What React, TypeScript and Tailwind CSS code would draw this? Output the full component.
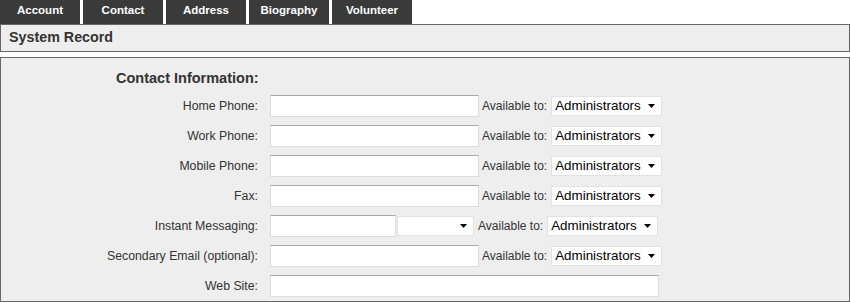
import React from "react";

const tabs = ["Account", "Contact", "Address", "Biography", "Volunteer"];

function FakeSelect({ width, text }: { width: string; text?: string }) {
  return (
    <div
      className={`${width} h-[20px] bg-white border border-[#e2e2e2] flex items-center pl-[3px] pr-[3px] justify-between`}
    >
      <span className="text-[13.4px] text-black leading-none">{text ?? ""}</span>
      <svg width="7" height="4" viewBox="0 0 7 4" className="mr-[3px]">
        <path d="M0 0 H7 L3.5 4 Z" fill="#000" />
      </svg>
    </div>
  );
}

function TextInput({ width }: { width: string }) {
  return (
    <input
      type="text"
      className={`${width} h-[22px] bg-white border border-[#dcdcdc] border-t-[#a9a9a9] outline-none`}
    />
  );
}

function Row({ label, children }: { label: string; children: React.ReactNode }) {
  return (
    <div className="h-[30px] flex items-center">
      <div className="w-[257px] text-right text-[12.3px] text-[#333]">{label}</div>
      <div className="ml-[12px] flex items-center">{children}</div>
    </div>
  );
}

function Avail({ ml = "ml-[3px]" }: { ml?: string }) {
  return <span className={`${ml} mr-[4px] text-[12px] text-[#333]`}>Available to:</span>;
}

export default function App() {
  return (
    <div
      className="w-[850px] h-[303px] bg-white"
      style={{ fontFamily: '"Liberation Sans", Arial, sans-serif' }}
    >
      <div className="flex gap-[3px] h-[24px]">
        {tabs.map((t) => (
          <div
            key={t}
            className="w-[80px] h-[24px] bg-[#3a3a3a] text-white font-bold text-[11.5px] flex items-center justify-center pb-[2px]"
          >
            {t}
          </div>
        ))}
      </div>
      <div className="h-[28px] border border-[#666] bg-[#eeeeee] flex items-center pl-[8px]">
        <span className="font-bold text-[14.3px] text-[#333]">System Record</span>
      </div>
      <div className="mt-[5px] h-[245px] border border-[#666] bg-[#eeeeee] pt-[10px]">
        <div className="h-[20px] leading-[20px] pl-[115px] font-bold text-[14.5px] text-[#333]">
          Contact Information:
        </div>
        <div className="mt-[3px]">
          {["Home Phone:", "Work Phone:", "Mobile Phone:", "Fax:"].map((l) => (
            <Row key={l} label={l}>
              <TextInput width="w-[209px]" />
              <Avail />
              <FakeSelect width="w-[111px]" text="Administrators" />
            </Row>
          ))}
          <Row label="Instant Messaging:">
            <TextInput width="w-[126px]" />
            <div className="ml-[1px]">
              <FakeSelect width="w-[77px]" />
            </div>
            <Avail ml="ml-[4px]" />
            <FakeSelect width="w-[111px]" text="Administrators" />
          </Row>
          <Row label="Secondary Email (optional):">
            <TextInput width="w-[209px]" />
            <Avail />
            <FakeSelect width="w-[111px]" text="Administrators" />
          </Row>
          <Row label="Web Site:">
            <TextInput width="w-[389px]" />
          </Row>
        </div>
      </div>
    </div>
  );
}
